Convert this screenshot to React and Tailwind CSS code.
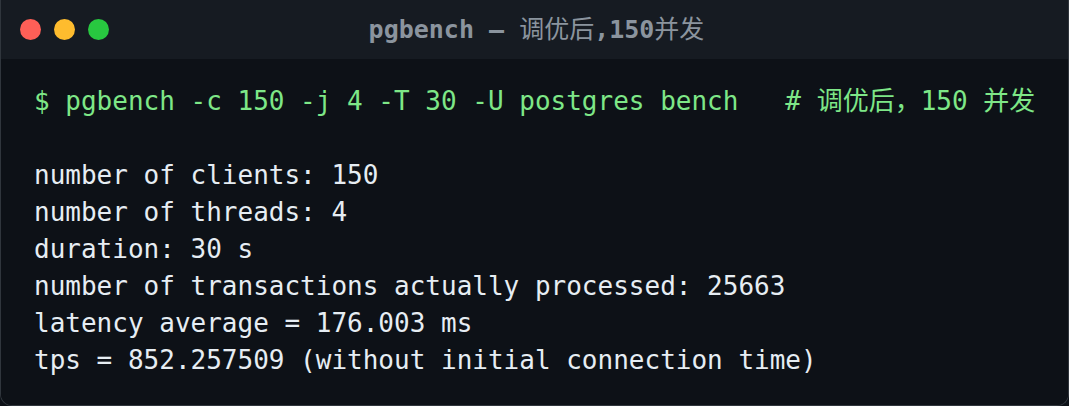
const lines = [
  "number of clients: 150",
  "number of threads: 4",
  "duration: 30 s",
  "number of transactions actually processed: 25663",
  "latency average = 176.003 ms",
  "tps = 852.257509 (without initial connection time)",
];

const App = () => {
  return (
    <div className="w-[1069px] h-[406px] bg-[#0d1117] overflow-hidden">
      <div className="w-full h-full flex flex-col border-x border-b border-[#30363d] rounded-b-[12px] overflow-hidden font-['DejaVu_Sans_Mono','Noto_Sans_CJK_SC',monospace]">
        {/* title bar */}
        <div className="relative h-[59px] shrink-0 bg-[#161b22] flex items-center px-[19px]">
          <div className="flex gap-[13px]">
            <span className="w-[21px] h-[21px] rounded-full bg-[#ff5f57]" />
            <span className="w-[21px] h-[21px] rounded-full bg-[#febc2e]" />
            <span className="w-[21px] h-[21px] rounded-full bg-[#28c840]" />
          </div>
          <div className="absolute inset-0 flex items-center justify-center text-[25px] font-bold text-[#8b949e] pl-[4px]">
            <span className="whitespace-pre">
              pgbench — <span className="font-normal">调优后</span>,150<span className="font-normal">并发</span>
            </span>
          </div>
        </div>
        {/* output */}
        <div className="flex-1 bg-[#0d1117] pt-[24px] pl-[33px] text-[26px] leading-[37px] whitespace-pre">
          <div className="text-[#7ee787]">
            $ pgbench -c 150 -j 4 -T 30 -U postgres bench   # 调优后，150 并发
          </div>
          <div>&nbsp;</div>
          {lines.map((l) => (
            <div key={l} className="text-[#e6edf3]">
              {l}
            </div>
          ))}
        </div>
      </div>
    </div>
  );
};

export default App;
